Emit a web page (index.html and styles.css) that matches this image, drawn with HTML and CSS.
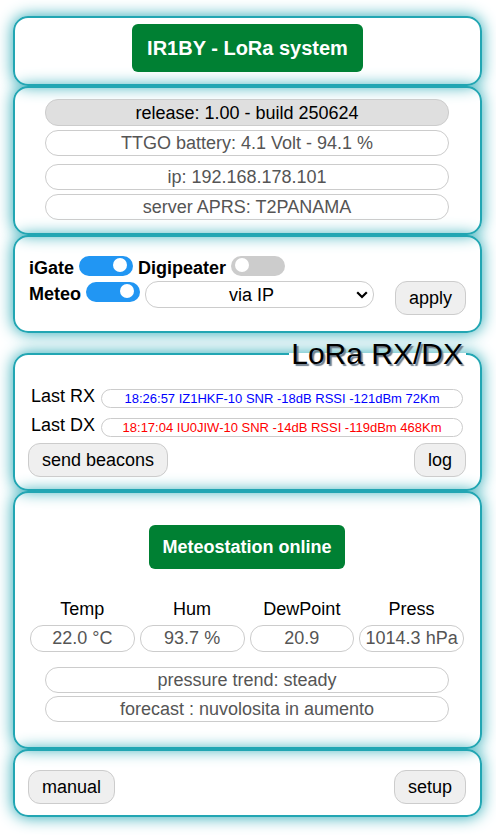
FILE: index.html
```html
<!DOCTYPE html>
<html lang="en">
<head>
<meta charset="utf-8">
<meta name="viewport" content="width=device-width, initial-scale=1">
<title>IR1BY - LoRa system</title>
<link rel="stylesheet" href="styles.css">
</head>
<body>
<main>
  <header class="panel panel-title">
    <button type="button" class="badge badge-large">IR1BY - LoRa system</button>
  </header>

  <section class="panel panel-info">
    <div class="field field-release">release: 1.00 - build 250624</div>
    <div class="field">TTGO battery: 4.1 Volt - 94.1 %</div>
    <div class="field field-group">ip: 192.168.178.101</div>
    <div class="field">server APRS: T2PANAMA</div>
  </section>

  <form class="panel panel-options">
    <div class="options">
      <div class="option-row">
        <label for="igate">iGate</label>
        <input class="switch" type="checkbox" id="igate" checked>
        <label for="digi">Digipeater</label>
        <input class="switch" type="checkbox" id="digi">
      </div>
      <div class="option-row option-row-meteo">
        <label for="meteo">Meteo</label>
        <input class="switch" type="checkbox" id="meteo" checked>
        <div class="source-wrap">
          <select class="source" aria-label="Meteo source">
            <option>via IP</option>
          </select>
          <svg class="source-arrow" viewBox="0 0 12 8" width="12" height="8" aria-hidden="true">
            <path d="M1.2 1.2 L6 6 L10.8 1.2" fill="none" stroke="#000" stroke-width="2.2"/>
          </svg>
        </div>
      </div>
    </div>
    <button type="button" class="btn">apply</button>
  </form>

  <fieldset class="panel panel-radio">
    <legend>LoRa RX/DX</legend>
    <div class="packet">
      <span>Last RX</span>
      <output class="packet-text packet-rx">18:26:57 IZ1HKF-10 SNR -18dB RSSI -121dBm 72Km</output>
    </div>
    <div class="packet">
      <span>Last DX</span>
      <output class="packet-text packet-dx">18:17:04 IU0JIW-10 SNR -14dB RSSI -119dBm 468Km</output>
    </div>
    <div class="actions">
      <button type="button" class="btn">send beacons</button>
      <button type="button" class="btn">log</button>
    </div>
  </fieldset>

  <section class="panel panel-meteo">
    <button type="button" class="badge">Meteostation online</button>
    <table class="readings">
      <thead>
        <tr><th>Temp</th><th>Hum</th><th>DewPoint</th><th>Press</th></tr>
      </thead>
      <tbody>
        <tr><td>22.0 °C</td><td>93.7 %</td><td>20.9</td><td>1014.3 hPa</td></tr>
      </tbody>
    </table>
    <div class="forecast">
      <div class="field">pressure trend: steady</div>
      <div class="field">forecast : nuvolosita in aumento</div>
    </div>
  </section>

  <footer class="panel panel-footer">
    <div class="actions">
      <button type="button" class="btn">manual</button>
      <button type="button" class="btn">setup</button>
    </div>
  </footer>
</main>
</body>
</html>
```

FILE: styles.css
```css
* {
  box-sizing: border-box;
}

body {
  margin: 0;
  background: #fff;
  color: #000;
  font: 18px/24px "Liberation Sans", Arial, sans-serif;
}

main {
  padding: 16px 14px 18px 13px;
}

button,
select {
  font: inherit;
  color: inherit;
}

.panel {
  margin: 0;
  min-width: 0;
  border: 2px solid #22a6b3;
  border-radius: 15px;
  box-shadow: 0 0 16px #22a6b3;
}

.panel-title {
  padding: 6px 14px 12px;
  text-align: center;
}

.badge {
  display: block;
  margin: 0 auto;
  padding: 10px 13px;
  border: 0;
  border-radius: 6px;
  background: #008033;
  color: #fff;
  font-weight: bold;
}

.badge-large {
  padding: 12px 15px;
  font-size: 20px;
}

.panel-info {
  display: flex;
  flex-direction: column;
  gap: 4px;
  padding: 11px 31px 13px 30px;
}

.field {
  border: 1px solid #ccc;
  border-radius: 13px;
  color: #555;
  text-align: center;
}

.field-release {
  padding-top: 1px;
  background: #dfdfdf;
  color: #000;
}

.field-group {
  margin-top: 4px;
}

.panel-options {
  display: flex;
  align-items: flex-end;
  gap: 21px;
  padding: 19px 14px 16px;
}

.options {
  flex: 1;
  display: flex;
  flex-direction: column;
  gap: 1px;
  margin-bottom: 7px;
  font-weight: bold;
}

.option-row {
  display: flex;
  gap: 5px;
}

.option-row-meteo {
  line-height: 27px;
}

.switch {
  appearance: none;
  flex: none;
  display: flex;
  width: 54px;
  height: 20px;
  margin: 0;
  padding: 2px 6px 4px 4px;
  border-radius: 10px;
  background: #ccc;
}

.option-row-meteo .switch {
  margin-top: 1px;
}

.switch::before {
  content: "";
  width: 14px;
  height: 14px;
  border-radius: 50%;
  background: #fff;
}

.switch:checked {
  justify-content: flex-end;
  background: #2196f3;
}

.source-wrap {
  position: relative;
  flex: 1;
  display: flex;
  min-width: 0;
}

.source {
  appearance: none;
  width: 100%;
  height: 27px;
  margin: 0;
  padding: 0 20px 0 4px;
  border: 1px solid #ccc;
  border-radius: 13px;
  background: #fff;
  font-weight: normal;
  text-align: center;
}

.source-arrow {
  position: absolute;
  top: 10px;
  right: 6px;
  pointer-events: none;
}

.btn {
  height: 34px;
  margin: 0;
  padding: 0 13px;
  border: 1px solid #ccc;
  border-radius: 12px;
  background: #efefef;
}

.panel-radio {
  margin-top: 4px;
  padding: 14px 14px 12px 13px;
}

.panel-radio legend {
  margin: 0 0 0 auto;
  padding: 0 3px 0 2px;
  font-size: 30px;
  line-height: 34px;
  text-shadow: 2px 2px 1px #708090;
}

.packet {
  display: flex;
  align-items: flex-end;
  gap: 6px;
  margin: 0 3px 6px;
  line-height: 23px;
}

.packet-text {
  flex: 1;
  border: 1px solid #ccc;
  border-radius: 10px;
  font-size: 13px;
  line-height: 17px;
  text-align: center;
}

.packet-rx {
  color: #00f;
}

.packet-dx {
  color: #f00;
}

.actions {
  display: flex;
  justify-content: space-between;
}

.panel-meteo {
  padding: 32px 11px 25px 10px;
}

.readings {
  width: 100%;
  margin-top: 28px;
  table-layout: fixed;
  border-collapse: separate;
  border-spacing: 5px 0;
  text-align: center;
  white-space: nowrap;
}

.readings th {
  padding: 0 0 4px;
  font-weight: normal;
}

.readings td {
  padding: 0;
  border: 1px solid #ccc;
  border-radius: 13px;
  color: #555;
  line-height: 25px;
}

.forecast {
  display: flex;
  flex-direction: column;
  gap: 3px;
  margin: 15px 20px 0;
}

.panel-footer {
  padding: 19px 14px 11px 13px;
}
```
